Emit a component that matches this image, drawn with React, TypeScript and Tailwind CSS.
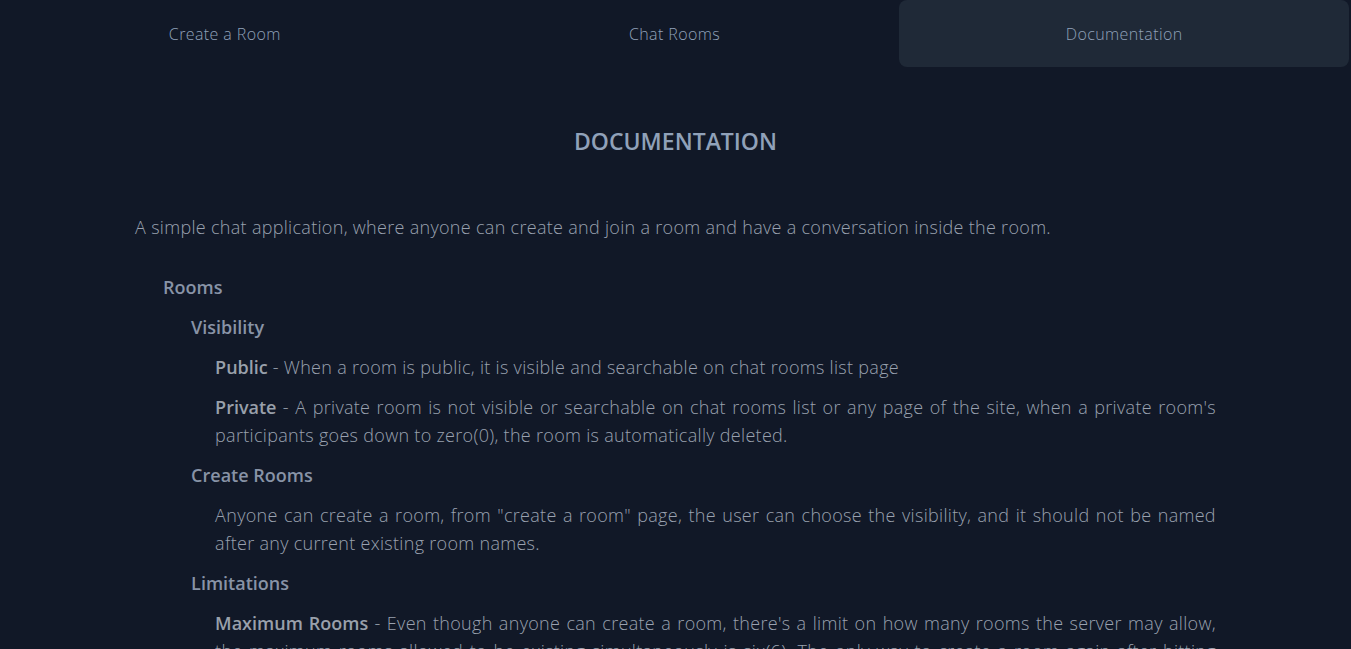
const tabs = ["Create a Room", "Chat Rooms", "Documentation"];

const Bold = ({ children }: { children: React.ReactNode }) => (
  <span className="font-semibold tracking-normal text-[#99a0ab]">{children}</span>
);

export default function App() {
  const active = "Documentation";

  return (
    <div className="min-h-screen bg-[#111827] font-['Open_Sans',sans-serif]">
      {/* top nav */}
      <nav className="grid grid-cols-3 pr-[2px]">
        {tabs.map((t) => (
          <div
            key={t}
            className={
              "flex h-[67px] items-center justify-center rounded-lg text-base font-light tracking-[0.4px] text-slate-400 " +
              (t === active ? "bg-[#1f2937]" : "")
            }
          >
            {t}
          </div>
        ))}
      </nav>

      <main className="mx-auto w-4/5 pt-[58px] pb-10">
        <h1 className="text-center text-[23px] leading-8 font-semibold text-slate-400">DOCUMENTATION</h1>

        <p className="mt-[56px] text-lg font-light tracking-[0.3px] text-gray-400">
          A simple chat application, where anyone can create and join a room and have a conversation inside the room.
        </p>

        <section className="mt-8 pl-7">
          <h2 className="text-lg font-semibold text-[#8893a6]">Rooms</h2>

          <div className="pl-7">
            <h3 className="mt-3 text-lg font-semibold text-[#8893a6]">Visibility</h3>
            <div className="pl-6 text-justify text-lg font-light tracking-[0.3px] text-gray-400">
              <p className="mt-3">
                <Bold>Public</Bold> - When a room is public, it is visible and searchable on chat rooms list page
              </p>
              <p className="mt-3">
                <Bold>Private</Bold> - A private room is not visible or searchable on chat rooms list or any page of
                the site, when a private room's participants goes down to zero(0), the room is automatically deleted.
              </p>
            </div>

            <h3 className="mt-3 text-lg font-semibold text-[#8893a6]">Create Rooms</h3>
            <div className="pl-6 text-justify text-lg font-light tracking-[0.3px] text-gray-400">
              <p className="mt-3">
                Anyone can create a room, from "create a room" page, the user can choose the visibility, and it should
                not be named after any current existing room names.
              </p>
            </div>

            <h3 className="mt-3 text-lg font-semibold text-[#8893a6]">Limitations</h3>
            <div className="pl-6 text-justify text-lg font-light tracking-[0.3px] text-gray-400">
              <p className="mt-3">
                <Bold>Maximum Rooms</Bold> - Even though anyone can create a room, there's a limit on how many rooms
                the server may allow, the maximum rooms allowed to be existing simultaneously is six(6). The only way
                to create a room again after hitting the limit is to wait for a room to be deleted.
              </p>
            </div>
          </div>
        </section>
      </main>
    </div>
  );
}
